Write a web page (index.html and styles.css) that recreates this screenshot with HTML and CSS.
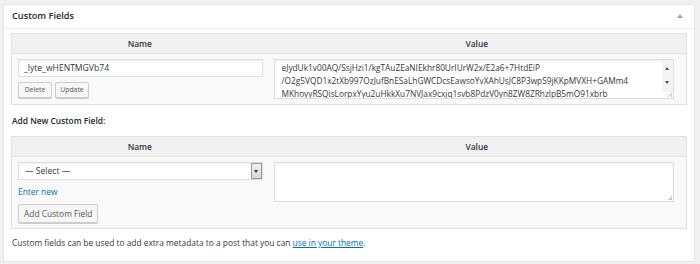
FILE: index.html
```html
<!DOCTYPE html>
<html lang="en">
<head>
<meta charset="UTF-8">
<title>Custom Fields</title>
<link rel="stylesheet" href="styles.css">
</head>
<body>
<div class="postbox">
  <div class="hndle">
    <span>Custom Fields</span>
    <span class="toggle"></span>
  </div>
  <div class="inside">
    <table class="meta">
      <thead>
        <tr><th class="col-name">Name</th><th>Value</th></tr>
      </thead>
      <tbody>
        <tr>
          <td class="col-name">
            <div class="field">_lyte_wHENTMGVb74</div>
            <div class="btns">
              <span class="btn small">Delete</span>
              <span class="btn small">Update</span>
            </div>
          </td>
          <td class="col-value">
            <div class="area filled">
              <div class="area-text">eJydUk1v00AQ/SsjHzi1/kgTAuZEaNIEkhr80UrIUrW2x/E2a6+7HtdEiP<br>/O2g5VQD1x2tXb997OzJufBnESaLhGWCDcsEawsoYvXAhUsJC8P3wpS9jKKpMVXH+GAMm4<br>MKhoyyRSQisLorpxYyu2uHkkXu7NVJax9cxjq1svb8PdzV0yn8ZW8ZRhzlpB5mO91xbrb</div>
              <div class="scroll">
                <span class="arr up"></span>
                <span class="arr down"></span>
              </div>
              <span class="grip"></span>
            </div>
          </td>
        </tr>
      </tbody>
    </table>

    <p class="add-title">Add New Custom Field:</p>

    <table class="meta">
      <thead>
        <tr><th class="col-name">Name</th><th>Value</th></tr>
      </thead>
      <tbody>
        <tr>
          <td class="col-name">
            <div class="field select">— Select —<span class="sel-btn"></span></div>
            <a class="enter-new" href="#">Enter new</a>
            <span class="btn">Add Custom Field</span>
          </td>
          <td class="col-value">
            <div class="area empty"><span class="grip"></span></div>
          </td>
        </tr>
      </tbody>
    </table>

    <p class="note">Custom fields can be used to add extra metadata to a post that you can <a href="#">use in your theme</a>.</p>
  </div>
</div>
</body>
</html>
```

FILE: styles.css
```css
* {
  box-sizing: border-box;
}
body {
  margin: 0;
  background: #f1f1f1;
  font-family: "Open Sans", "Liberation Sans", sans-serif;
  color: #32373c;
  font-size: 8.4px;
}
.postbox {
  margin: 4px 0 0 3px;
  width: 692px;
  height: 258px;
  background: #fff;
  border: 1px solid #e5e5e5;
}
.hndle {
  height: 24px;
  border-bottom: 1px solid #eee;
  padding: 0 8px 2px;
  display: flex;
  align-items: center;
  justify-content: space-between;
  font-size: 9.2px;
  font-weight: 600;
  color: #23282d;
}
.toggle {
  width: 0;
  height: 0;
  border-left: 3px solid transparent;
  border-right: 3px solid transparent;
  border-bottom: 4px solid #a0a5aa;
  margin-right: 3px;
}
.inside {
  padding: 4px 7px 0 7px;
}
.meta {
  width: 100%;
  border-collapse: collapse;
  border: 1px solid #e1e1e1;
  table-layout: fixed;
}
.meta th {
  background: #f1f1f1;
  height: 20px;
  padding: 0;
  font-weight: 600;
  color: #32373c;
  border-bottom: 1px solid #e1e1e1;
  line-height: 12px;
}
.meta td {
  background: #f9f9f9;
  vertical-align: top;
  padding: 5px 12px 5px 6px;
}
.meta .col-name {
  width: 256px;
}
.meta td.col-name {
  padding-right: 5px;
}
.field {
  height: 18px;
  border: 1px solid #ddd;
  background: #fff;
  box-shadow: inset 0 1px 2px rgba(0,0,0,.07);
  padding: 0 5px;
  line-height: 16px;
  font-size: 8.6px;
  color: #32373c;
  position: relative;
}
.btns {
  display: flex;
  gap: 3px;
  margin-top: 5px;
}
.btn {
  display: inline-block;
  border: 1px solid #ccc;
  border-radius: 2px;
  background: #f7f7f7;
  box-shadow: 0 1px 0 #ccc;
  color: #555;
  padding: 0 5px;
  height: 19px;
  line-height: 17px;
  font-size: 8.4px;
}
.btn.small {
  width: 34px;
  height: 16px;
  line-height: 14px;
  padding: 0;
  text-align: center;
  font-size: 6.8px;
}
.area {
  width: 400px;
  height: 40px;
  border: 1px solid #ddd;
  background: #fff;
  box-shadow: inset 0 1px 2px rgba(0,0,0,.07);
  position: relative;
  overflow: hidden;
}
.area-text {
  padding: 1px 14px 0 7px;
  line-height: 13px;
  white-space: nowrap;
  font-size: 8.3px;
  color: #32373c;
}
.scroll {
  position: absolute;
  top: 0;
  right: 0;
  width: 11px;
  height: 32px;
  background: #f4f4f4;
}
.arr {
  position: absolute;
  left: 3px;
  width: 0;
  height: 0;
  border-left: 2.5px solid transparent;
  border-right: 2.5px solid transparent;
}
.arr.up {
  top: 7px;
  border-bottom: 3px solid #505050;
}
.arr.down {
  top: 21px;
  border-top: 3px solid #505050;
}
.grip {
  position: absolute;
  right: 1px;
  bottom: 1px;
  width: 5px;
  height: 5px;
  background: linear-gradient(135deg, transparent 55%, #bbb 55%, #bbb 65%, transparent 65%, transparent 80%, #bbb 80%);
}
.select {
  padding-left: 6px;
}
.sel-btn {
  position: absolute;
  right: 0;
  top: 0;
  width: 11px;
  height: 16px;
  border: 1px solid #999;
  background: linear-gradient(#f0f0f0, #d8d8d8);
}
.sel-btn::after {
  content: "";
  position: absolute;
  left: 2px;
  top: 6px;
  border-left: 2.5px solid transparent;
  border-right: 2.5px solid transparent;
  border-top: 3px solid #333;
}
.enter-new {
  display: block;
  color: #0073aa;
  text-decoration: none;
  margin: 5px 0 6px;
  line-height: 13px;
}
.add-title {
  margin: 10px 0 9px 1px;
  font-weight: 600;
  color: #23282d;
  line-height: 12px;
}
.note {
  margin: 8px 0 0 1px;
  line-height: 12px;
}
.note a {
  color: #0073aa;
}
```
